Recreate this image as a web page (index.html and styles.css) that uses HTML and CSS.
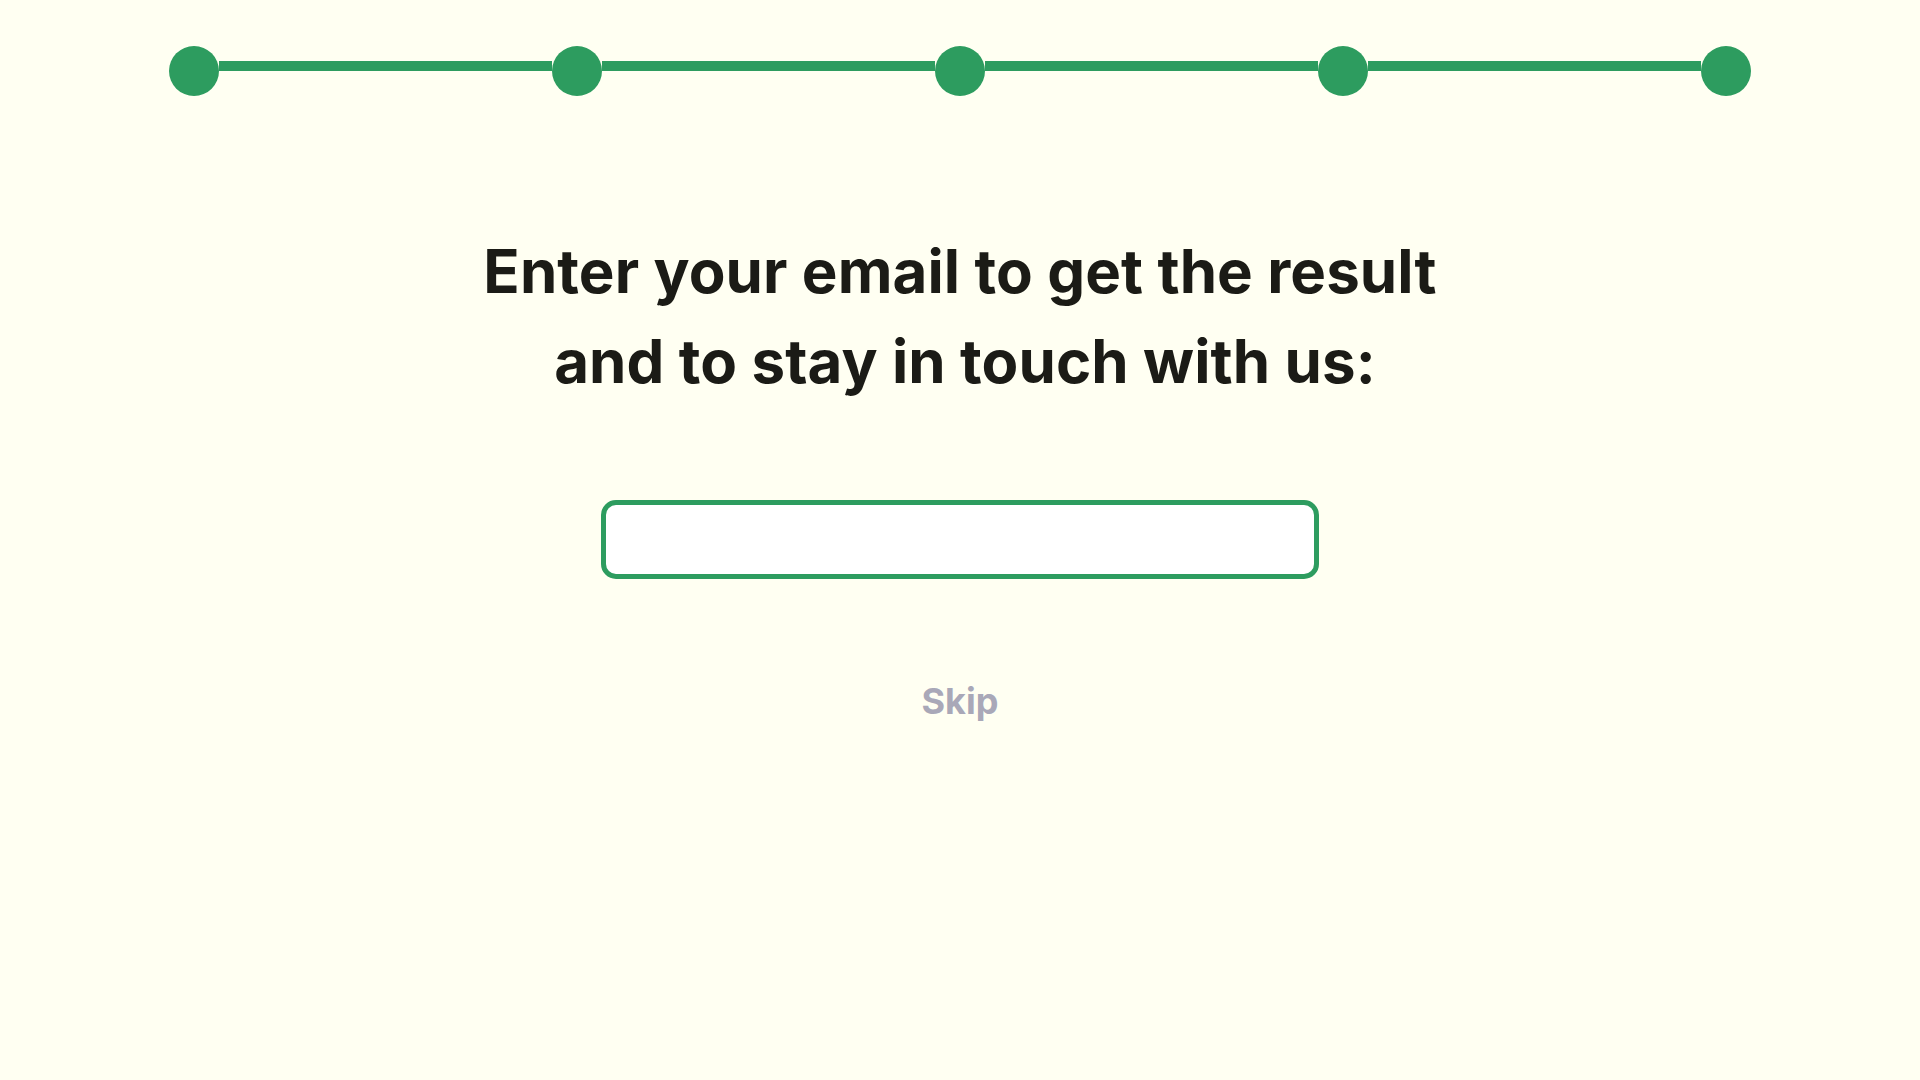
FILE: index.html
```html
<!DOCTYPE html>
<html lang="en">
<head>
<meta charset="utf-8">
<title>Email</title>
<link rel="stylesheet" href="styles.css">
</head>
<body>
<div class="page">
  <div class="progress">
    <span class="dot"></span><span class="seg"></span>
    <span class="dot"></span><span class="seg"></span>
    <span class="dot"></span><span class="seg"></span>
    <span class="dot"></span><span class="seg"></span>
    <span class="dot"></span>
  </div>
  <h1 class="title">Enter your email to get the result<br><span class="line2">and to stay in touch with us:</span></h1>
  <input class="email" type="email" aria-label="Email">
  <a class="skip" href="#">Skip</a>
</div>
</body>
</html>
```

FILE: styles.css
```css
html, body {
  margin: 0;
  padding: 0;
  background: #fffff2;
}
body {
  font-family: Inter, "Noto Sans", sans-serif;
  width: 1920px;
  height: 1080px;
}
.page {
  display: flex;
  flex-direction: column;
  align-items: center;
}
.progress {
  display: flex;
  align-items: flex-start;
  width: 1582px;
  margin-top: 46px;
}
.dot {
  width: 50px;
  height: 50px;
  border-radius: 50%;
  background: #2d9c5f;
  flex: none;
}
.seg {
  flex: 1;
  height: 10px;
  margin-top: 15px;
  background: #2d9c5f;
}
.title {
  margin: 130px 0 0;
  font-size: 60px;
  line-height: 90px;
  font-weight: 700;
  color: #1b1b16;
  text-align: center;
  letter-spacing: 0.1px;
}
.line2 {
  padding-left: 10px;
}
.email {
  box-sizing: border-box;
  margin-top: 94px;
  width: 718px;
  height: 79px;
  border: 5px solid #2d9c5f;
  border-radius: 15px;
  background: #ffffff;
  outline: none;
  padding: 0 20px;
  font-family: Inter, sans-serif;
  font-size: 24px;
}
.skip {
  margin-top: 101px;
  font-size: 36px;
  line-height: 42px;
  font-weight: 700;
  color: #a9a8b8;
  text-decoration: none;
}
```
